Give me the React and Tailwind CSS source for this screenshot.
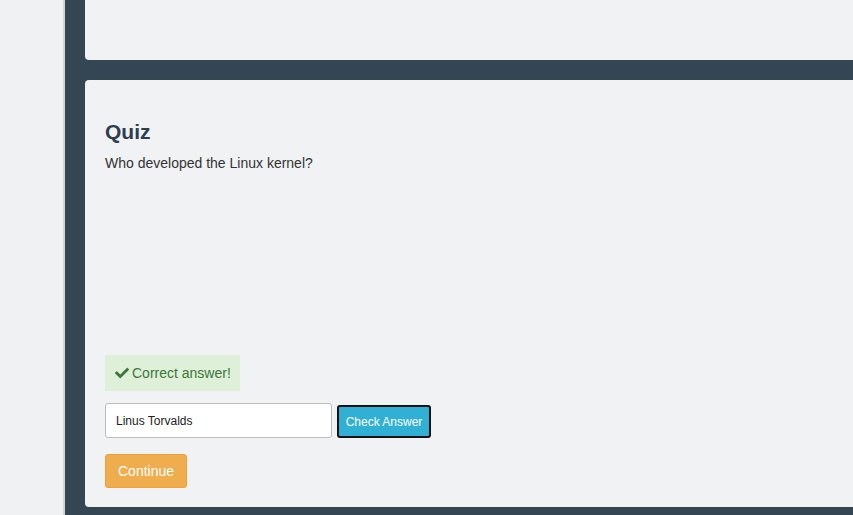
import React from "react";
import { FaCheck } from "react-icons/fa";

export default function App() {
  return (
    <div className="flex h-[515px] w-[853px] overflow-hidden font-['Liberation_Sans',Arial,sans-serif]">
      <div className="w-[65px] shrink-0 bg-[#f0f1f3] border-r-2 border-[#d2d4d6]" />
      <div className="flex-1 bg-[#344654] pl-5 flex flex-col gap-5">
        <div className="h-[60px] shrink-0 bg-[#f0f2f4] rounded-bl-[4px]" />
        <div className="h-[427px] shrink-0 bg-[#f0f2f4] rounded-l-[4px] pl-5 pt-10 pb-[19px] flex flex-col">
          <h3 className="text-[21px] leading-[24px] font-bold text-[#2c3e50]">Quiz</h3>
          <p className="mt-[9px] text-[14px] leading-[20px] text-[#333]">Who developed the Linux kernel?</p>
          <div className="mt-auto self-start bg-[#dff0d8] text-[#3c763d] text-[14px] leading-[20px] pl-[10px] pr-[9px] py-2 flex items-center gap-[3px]">
            <FaCheck className="w-[14px] h-[14px]" />
            <span>Correct answer!</span>
          </div>
          <div className="mt-3 flex items-end gap-[5px]">
            <input
              readOnly
              value="Linus Torvalds"
              className="w-[227px] h-[35px] bg-white border border-[#bdbdbd] rounded-[3px] px-[10px] text-[12px] text-[#222] outline-none font-['Liberation_Sans',Arial,sans-serif]"
            />
            <button className="h-[33px] w-[94px] bg-[#31b0d5] border-2 border-[#111] rounded-[3px] text-white text-[12px]">
              Check Answer
            </button>
          </div>
          <button className="mt-4 self-start h-[34px] px-3 bg-[#f0ad4e] border border-[#eea236] rounded-[3px] text-white text-[14px]">
            Continue
          </button>
        </div>
      </div>
    </div>
  );
}
